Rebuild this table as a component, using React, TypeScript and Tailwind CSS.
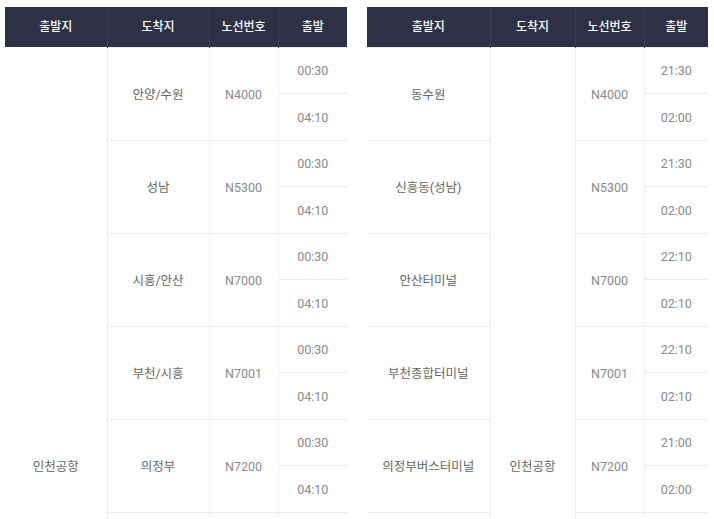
import React from 'react';

type Group = { place: string; route: string; times: [string, string] };

const leftRows: Group[] = [
  { place: '안양/수원', route: 'N4000', times: ['00:30', '04:10'] },
  { place: '성남', route: 'N5300', times: ['00:30', '04:10'] },
  { place: '시흥/안산', route: 'N7000', times: ['00:30', '04:10'] },
  { place: '부천/시흥', route: 'N7001', times: ['00:30', '04:10'] },
  { place: '의정부', route: 'N7200', times: ['00:30', '04:10'] },
];

const rightRows: Group[] = [
  { place: '동수원', route: 'N4000', times: ['21:30', '02:00'] },
  { place: '신흥동(성남)', route: 'N5300', times: ['21:30', '02:00'] },
  { place: '안산터미널', route: 'N7000', times: ['22:10', '02:10'] },
  { place: '부천종합터미널', route: 'N7001', times: ['22:10', '02:10'] },
  { place: '의정부버스터미널', route: 'N7200', times: ['21:00', '02:00'] },
];

const th = 'h-[40px] p-0 text-center text-[12px] font-medium text-white border-l border-[#3b3e52] first:border-l-0';
const td = 'p-0 pt-[3px] text-center border-[#ececec]';

// rows that continue below the visible area (the list goes on past the window)
const SPAN = rightRows.length * 2 + 1;

const LeftTable = () => (
  <table className="w-[342px] table-fixed border-collapse">
    <colgroup>
      <col className="w-[102px]" />
      <col className="w-[102px]" />
      <col className="w-[69px]" />
      <col className="w-[69px]" />
    </colgroup>
    <thead className="bg-[#2e3145]">
      <tr>
        <th className={th}>출발지</th>
        <th className={th}>도착지</th>
        <th className={th}>노선번호</th>
        <th className={th}>출발</th>
      </tr>
    </thead>
    <tbody>
      {leftRows.map((g, i) => (
        <React.Fragment key={g.route}>
          <tr className="h-[46.5px]">
            {i === 0 && (
              <td rowSpan={SPAN} className={`${td} align-middle text-[12.5px] text-[#666]`}>
                인천공항
              </td>
            )}
            <td rowSpan={2} className={`${td} border border-r-[#f3f3f3] text-[12.5px] text-[#666]`}>{g.place}</td>
            <td rowSpan={2} className={`${td} border border-r-[#f3f3f3] text-[12.5px] text-[#8a8a8a]`}>{g.route}</td>
            <td className={`${td} border-t border-b text-[12.5px] text-[#8a8a8a]`}>{g.times[0]}</td>
          </tr>
          <tr className="h-[46.5px]">
            <td className={`${td} border-b text-[12.5px] text-[#8a8a8a]`}>{g.times[1]}</td>
          </tr>
        </React.Fragment>
      ))}
      <tr className="h-[373px]">
        <td className={`${td} border border-r-[#f3f3f3]`} />
        <td className={`${td} border border-r-[#f3f3f3]`} />
        <td className={`${td} border-t`} />
      </tr>
    </tbody>
  </table>
);

const RightTable = () => (
  <table className="w-[341px] table-fixed border-collapse">
    <colgroup>
      <col className="w-[123px]" />
      <col className="w-[85px]" />
      <col className="w-[69px]" />
      <col className="w-[64px]" />
    </colgroup>
    <thead className="bg-[#2e3145]">
      <tr>
        <th className={th}>출발지</th>
        <th className={th}>도착지</th>
        <th className={th}>노선번호</th>
        <th className={th}>출발</th>
      </tr>
    </thead>
    <tbody>
      {rightRows.map((g, i) => (
        <React.Fragment key={g.route}>
          <tr className="h-[46.5px]">
            <td rowSpan={2} className={`${td} border-t border-b text-[12.5px] text-[#666]`}>{g.place}</td>
            {i === 0 && (
              <td rowSpan={SPAN} className={`${td} border-l border-r border-[#f0f0f0] align-middle text-[12.5px] text-[#666]`}>
                인천공항
              </td>
            )}
            <td rowSpan={2} className={`${td} border border-r-[#f3f3f3] text-[12.5px] text-[#8a8a8a]`}>{g.route}</td>
            <td className={`${td} border-t border-b text-[12.5px] text-[#8a8a8a]`}>{g.times[0]}</td>
          </tr>
          <tr className="h-[46.5px]">
            <td className={`${td} border-b text-[12.5px] text-[#8a8a8a]`}>{g.times[1]}</td>
          </tr>
        </React.Fragment>
      ))}
      <tr className="h-[373px]">
        <td className={`${td} border-t`} />
        <td className={`${td} border border-r-[#f3f3f3]`} />
        <td className={`${td} border-t`} />
      </tr>
    </tbody>
  </table>
);

export default function App() {
  return (
    <div
      className="h-[519px] w-[714px] overflow-hidden bg-white pl-[5px] pt-[7px]"
      style={{ fontFamily: 'Roboto, "Noto Sans CJK KR", sans-serif' }}
    >
      <div className="flex items-start gap-[20px]">
        <LeftTable />
        <RightTable />
      </div>
    </div>
  );
}
